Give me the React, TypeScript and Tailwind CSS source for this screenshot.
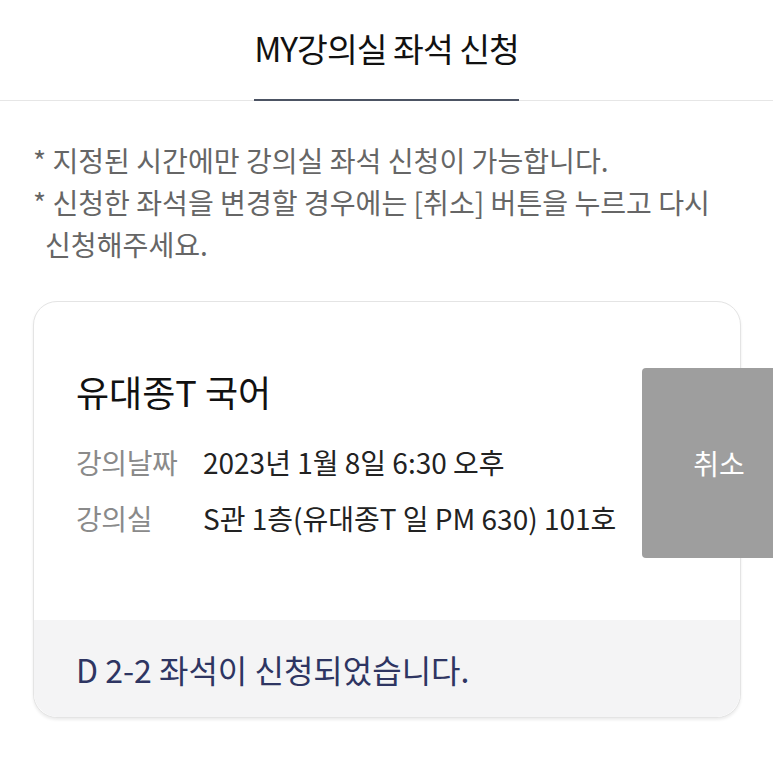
const FONT = "font-['Noto_Sans_CJK_KR','Noto_Sans',sans-serif]";

function Header() {
  return (
    <header className="relative border-b border-[#e6e6e6]">
      <h1 className="h-[100px] flex items-center justify-center text-[33.5px] tracking-[-1px] text-[#111] pb-1">
        MY강의실 좌석 신청
      </h1>
      <div className="absolute left-[254px] w-[265px] -bottom-px h-[2px] bg-[#4c5363]" />
    </header>
  );
}

function Notes() {
  return (
    <div className="pl-[33px] pr-6 pt-[38px] text-[28.1px] leading-[42px] text-[#666] whitespace-nowrap">
      <p>* 지정된 시간에만 강의실 좌석 신청이 가능합니다.</p>
      <p>* 신청한 좌석을 변경할 경우에는 [취소] 버튼을 누르고 다시</p>
      <p className="pl-[12px]">신청해주세요.</p>
    </div>
  );
}

function InfoRow({ label, value }: { label: string; value: string }) {
  return (
    <div className="flex leading-[36px] text-[28px]">
      <span className="w-[127px] shrink-0 text-[#8a8a8a] tracking-[-0.4px]">{label}</span>
      <span className="text-[#222] whitespace-nowrap">{value}</span>
    </div>
  );
}

function SeatCard() {
  return (
    <div className="relative mx-[33px] mt-[36px] w-[708px] rounded-[24px] border border-[#e4e4e4] bg-white shadow-[0_2px_3px_rgba(0,0,0,0.08)]">
      <div className="h-[318px] pl-[42px] pt-[69px]">
        <h2 className="text-[36px] leading-[40px] text-[#111]">유대종T 국어</h2>
        <div className="mt-[33px] flex flex-col gap-[20px]">
          <InfoRow label="강의날짜" value="2023년 1월 8일 6:30 오후" />
          <InfoRow label="강의실" value="S관 1층(유대종T 일 PM 630) 101호" />
        </div>
      </div>
      <div className="h-[97px] rounded-b-[24px] bg-[#f4f4f5] pl-[42px] flex items-center">
        <p className="text-[32px] text-[#2e3562]">D 2-2 좌석이 신청되었습니다.</p>
      </div>
      <button className="absolute left-[608px] top-[66px] w-[154px] h-[190px] rounded-[4px] bg-[#9e9e9e] text-white text-[28px]">
        취소
      </button>
    </div>
  );
}

export default function App() {
  return (
    <div className={`${FONT} w-[773px] min-h-[772px] bg-white overflow-hidden`}>
      <Header />
      <Notes />
      <SeatCard />
    </div>
  );
}
